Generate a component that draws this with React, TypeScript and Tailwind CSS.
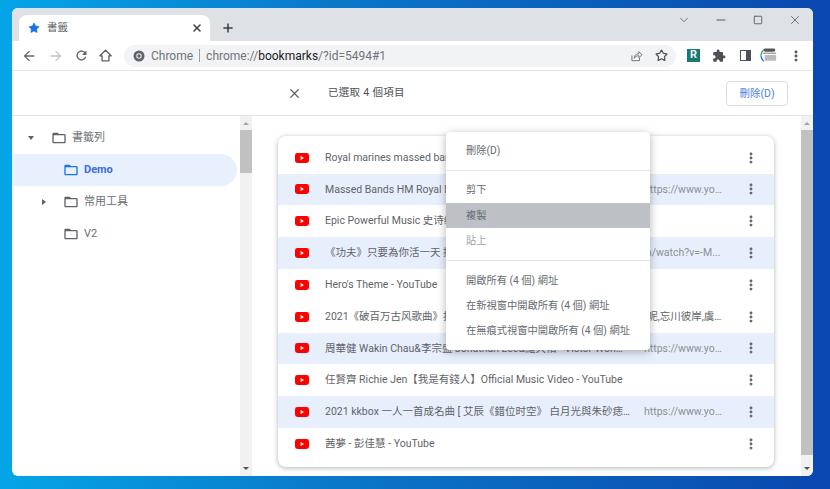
import { Star, X, Plus, ChevronDown, Minus, Square, EllipsisVertical } from "lucide-react";

const font = "font-['Roboto','Noto_Sans_CJK_TC',sans-serif]";

const rows = [
  { title: "Royal marines massed bands - YouTube", url: "", sel: false, titleW: "w-[397px]" },
  { title: "Massed Bands HM Royal Marines Beat Retreat - YouTube", url: "https://www.youtube.com/watch", sel: true, titleW: "w-[301px]", urlW: "ml-[18px] w-[78px]" },
  { title: "Epic Powerful Music 史诗级震撼音乐合集 - YouTube 播放清單 Deep", url: "", sel: false, titleW: "w-[397px]" },
  { title: "《功夫》只要為你活一天 插曲 - YouTube", url: "https://www.youtube.com/watch?v=-M...", sel: true, titleW: "w-[188px]", urlW: "ml-[18px] w-[200px]" },
  { title: "Hero's Theme - YouTube", url: "", sel: false, titleW: "w-[397px]" },
  { title: "2021《破百万古风歌曲》抖音 2021 古风歌曲大全,彼岸花,千年,\u200a白月光呢,忘川彼岸,虞美人", url: "", sel: false, titleW: "w-[398px]" },
  { title: "周華健 Wakin Chau&李宗盛 Jonathan Lee&羅大佑 - Victor Wong 2021 Live", url: "https://www.youtube.com/watch", sel: true, titleW: "w-[301px]", urlW: "ml-[18px] w-[78px]" },
  { title: "任賢齊 Richie Jen【我是有錢人】Official Music Video - YouTube", url: "", sel: false, titleW: "w-[397px]" },
  { title: "2021 kkbox 一人一首成名曲 [ 艾辰《錯位时空》 白月光與朱砂痣 周深 大魚 ]", url: "https://www.youtube.com/watch", sel: true, titleW: "w-[306px]", urlW: "ml-[13px] w-[78px]" },
  { title: "茜夢 - 彭佳慧 - YouTube", url: "", sel: false, titleW: "w-[397px]" },
];

function Icon({ d, className }: { d: string; className: string }) {
  return (
    <svg viewBox="0 0 24 24" fill="currentColor" className={className}>
      <path d={d} />
    </svg>
  );
}

function Folder({ blue }: { blue?: boolean }) {
  return (
    <Icon
      d="M20 6h-8l-2-2H4c-1.1 0-1.99.9-1.99 2L2 18c0 1.1.9 2 2 2h16c1.1 0 2-.9 2-2V8c0-1.1-.9-2-2-2zm0 12H4V8h16v10z"
      className={blue ? "size-[16px] text-[#1a73e8]" : "size-[16px] text-[#5f6368]"}
    />
  );
}

function Youtube() {
  return (
    <svg viewBox="0 0 14 10" className="h-[10px] w-[14px] shrink-0">
      <rect width="14" height="10" rx="2.4" fill="#f00" />
      <path d="M5.6 3v4l3.4-2z" fill="#fff" />
    </svg>
  );
}

function ScrollBar({ thumb }: { thumb: string }) {
  return (
    <div className="flex w-[12px] shrink-0 flex-col items-center bg-[#f1f1f1]">
      <div className="flex h-[14px] shrink-0 items-center justify-center">
        <div className="size-0 border-x-[3px] border-b-[3px] border-x-transparent border-b-[#a3a3a3]" />
      </div>
      <div className={thumb} />
      <div className="flex-1" />
      <div className="flex h-[16px] shrink-0 items-center justify-center">
        <div className="size-0 border-x-[3px] border-t-[3px] border-x-transparent border-t-[#505050]" />
      </div>
    </div>
  );
}

function TreeItem({ label, pad, arrow, active }: { label: string; pad: string; arrow?: "down" | "right"; active?: boolean }) {
  return (
    <div
      className={`flex h-[32px] w-[225px] items-center gap-[4px] rounded-r-full ${pad} ${
        active ? "bg-[#e8f0fe] font-bold text-[#3b6fd6]" : "text-[#6a6f74]"
      }`}
    >
      {arrow === "down" && <div className="mr-[13px] ml-[-1px] size-0 border-x-[3px] border-t-[4px] border-x-transparent border-t-[#5f6368]" />}
      {arrow === "right" && <div className="mr-[13px] size-0 border-y-[3px] border-l-[4px] border-y-transparent border-l-[#5f6368]" />}
      <Folder blue={active} />
      <span className="ml-[1px] text-[11px]">{label}</span>
    </div>
  );
}

function MenuItem({ label, hot, off }: { label: string; hot?: boolean; off?: boolean }) {
  return (
    <div
      className={`flex h-[25px] items-center px-[20px] text-[10.25px] whitespace-nowrap ${hot ? "bg-[#bdc1c6]" : ""} ${
        off ? "text-[#a0a5aa]" : "text-[#666b70]"
      }`}
    >
      {label}
    </div>
  );
}

export default function App() {
  return (
    <div className={`h-[489px] w-[830px] overflow-hidden bg-[linear-gradient(90deg,#05a5e8_0%,#0a78c8_40%,#0a47ae_100%)] pt-[8px] pl-[12px] ${font}`}>
      <div className="relative flex h-[468px] w-[801px] flex-col overflow-hidden rounded-[6px] bg-white">
        {/* tab strip */}
        <div className="flex h-[33px] shrink-0 items-end bg-[#dee1e6] pl-[7px]">
          <div className="flex h-[26px] w-[191px] items-center rounded-t-[8px] bg-white pr-[7px] pl-[9px]">
            <Star className="size-[12px] text-[#1a73e8]" fill="currentColor" strokeWidth={1} />
            <span className="ml-[7px] flex-1 text-[10.5px] text-[#5f6368]">書籤</span>
            <X className="size-[12px] text-[#3c4043]" strokeWidth={3} />
          </div>
          <div className="flex h-[26px] items-center pl-[11px]">
            <Plus className="size-[14px] text-[#3c4043]" strokeWidth={2.6} />
          </div>
          <div className="mb-[9px] ml-auto flex h-[24px] items-center text-[#4d5156]">
            <div className="flex w-[37px] justify-center pl-[1px]">
              <ChevronDown className="size-[14px]" strokeWidth={1.2} />
            </div>
            <div className="flex w-[37px] justify-center">
              <Minus className="size-[14px]" strokeWidth={1.6} />
            </div>
            <div className="flex w-[37px] justify-center">
              <Square className="size-[10px]" strokeWidth={2} />
            </div>
            <div className="flex w-[37px] justify-center">
              <X className="size-[14px]" strokeWidth={1.3} />
            </div>
          </div>
        </div>

        {/* toolbar */}
        <div className="flex h-[30px] shrink-0 items-center border-b border-[#e3e5e8] bg-white pl-[9px]">
          <Icon d="M20 11H7.83l5.59-5.59L12 4l-8 8 8 8 1.41-1.41L7.83 13H20v-2z" className="size-[16px] text-[#5f6368]" />
          <Icon d="M12 4l-1.41 1.41L16.17 11H4v2h12.17l-5.58 5.59L12 20l8-8z" className="ml-[11px] size-[16px] text-[#bdc1c6]" />
          <Icon
            d="M17.65 6.35C16.2 4.9 14.21 4 12 4c-4.42 0-7.99 3.58-7.99 8s3.57 8 7.99 8c3.73 0 6.84-2.55 7.73-6h-2.08c-.82 2.33-3.04 4-5.65 4-3.31 0-6-2.69-6-6s2.69-6 6-6c1.66 0 3.14.69 4.22 1.78L13 11h7V4l-2.35 2.35z"
            className="ml-[10px] size-[15px] text-[#5f6368]"
          />
          <svg viewBox="0 0 24 24" fill="none" stroke="#5f6368" strokeWidth="2.2" className="ml-[9px] size-[15px]">
            <path d="M12 3.5 3 12.5h3.5v8h11v-8H21z" strokeLinejoin="round" />
          </svg>
          <div className="ml-[11px] flex h-[22px] w-[552px] items-center rounded-full bg-[#f1f3f4] pl-[9px]">
            <svg viewBox="0 0 24 24" className="size-[12px]">
              <circle cx="12" cy="12" r="11" fill="#5f6368" />
              <circle cx="12" cy="12" r="5.5" fill="#f1f3f4" />
              <circle cx="12" cy="12" r="3.6" fill="#5f6368" />
            </svg>
            <span className="ml-[6px] text-[12px] text-[#70757a]">Chrome</span>
            <span className="mx-[6px] h-[13px] w-px bg-[#9aa0a6]" />
            <span className="text-[12px] text-[#70757a]">
              chrome://<span className="text-[#202124]">bookmarks</span>/?id=5494#1
            </span>
            <svg viewBox="0 0 24 24" fill="none" stroke="#6b7075" strokeWidth="1.6" className="ml-auto size-[14px]">
              <path d="M5 11v9h13v-5M9 16c0-5 3-8 8-8V4.5l5 5.5-5 5v-3.5c-4 0-6.5 1.5-8 4.5z" strokeLinejoin="round" />
            </svg>
            <Star className="mr-[8px] ml-[12px] size-[13px] text-[#4d5156]" strokeWidth={2.2} />
          </div>
          <div className="ml-[11px] flex size-[13px] items-center justify-center bg-[#17796f] text-[11px] font-bold text-[#e8f4f2]">R</div>
          <Icon
            d="M20.5 11H19V7c0-1.1-.9-2-2-2h-4V3.5C13 2.12 11.88 1 10.5 1S8 2.12 8 3.5V5H4c-1.1 0-1.99.9-1.99 2v3.8H3.5c1.49 0 2.7 1.21 2.7 2.7s-1.21 2.7-2.7 2.7H2V20c0 1.1.9 2 2 2h3.8v-1.5c0-1.49 1.21-2.7 2.7-2.7 1.49 0 2.7 1.21 2.7 2.7V22H17c1.1 0 2-.9 2-2v-4h1.5c1.38 0 2.5-1.12 2.5-2.5S21.88 11 20.5 11z"
            className="ml-[12px] size-[14px] text-[#4d5156]"
          />
          <div className="ml-[14px] flex h-[11px] w-[11px] justify-end border-[1.5px] border-[#4d5156]">
            <div className="w-[4px] bg-[#4d5156]" />
          </div>
          <svg viewBox="0 0 20 20" className="ml-[8px] size-[19px]">
            <path d="M2 10a8 8 0 0 1 3-6" fill="none" stroke="#34a853" strokeWidth="1.4" />
            <path d="M2 10a8 8 0 0 0 3 6" fill="none" stroke="#1a73e8" strokeWidth="1.4" />
            <rect x="5" y="2.5" width="12" height="3.5" rx="1.5" fill="#555" />
            <rect x="4" y="7" width="14" height="1.2" fill="#888" />
            <rect x="6" y="9.5" width="12" height="6" fill="#bbb" />
          </svg>
          <EllipsisVertical className="ml-[11px] size-[14px] text-[#4d5156]" strokeWidth={3} />
        </div>

        {/* page header */}
        <div className="flex h-[45px] shrink-0 items-center border-b border-[#e3e5e8] pr-[25px] pl-[275px]">
          <X className="size-[15px] text-[#5f6368]" strokeWidth={2} />
          <span className="ml-[26px] text-[10.5px] tracking-[0.3px] text-[#4d5156]">已選取 4 個項目</span>
          <button className="mt-[1px] ml-auto h-[25px] w-[62px] rounded-[4px] border border-[#dadce0] text-[10.5px] text-[#4a7fe0]">刪除(D)</button>
        </div>

        {/* content */}
        <div className="flex min-h-0 flex-1">
          <div className="flex w-[228px] shrink-0 flex-col pt-[6px]">
            <TreeItem label="書籤列" pad="pl-[17px]" arrow="down" />
            <TreeItem label="Demo" pad="pl-[51px]" active />
            <TreeItem label="常用工具" pad="pl-[30px]" arrow="right" />
            <TreeItem label="V2" pad="pl-[51px]" />
          </div>
          <ScrollBar thumb="h-[43px] w-[12px] shrink-0 bg-[#c1c1c1]" />
          <div className="min-w-0 flex-1 pt-[20px] pl-[26px]">
            <div className="w-[496px] rounded-[8px] bg-white pt-[5.8px] pb-[7px] shadow-[0_1px_5px_rgba(60,64,67,0.4)]">
              {rows.map((r, i) => (
                <div key={i} className={`flex h-[31.8px] items-center pr-[16px] pl-[17px] ${r.sel ? "bg-[#e8effc]" : ""}`}>
                  <Youtube />
                  <div className="ml-[16px] flex min-w-0 flex-1 items-center">
                    <span className={`truncate text-[10.5px] text-[#5f6368] ${r.titleW}`}>{r.title}</span>
                    {r.url && <span className={`truncate text-[10.5px] text-[#8a9095] ${r.urlW}`}>{r.url}</span>}
                  </div>
                  <EllipsisVertical className="size-[14px] shrink-0 text-[#5f6368]" strokeWidth={3} />
                </div>
              ))}
            </div>
          </div>
          <ScrollBar thumb="h-[325px] w-[12px] shrink-0 bg-[#c1c1c1]" />
        </div>

        {/* context menu */}
        <div className="absolute top-[124px] left-[434px] w-[204px] rounded-[4px] bg-white pt-[6px] pb-[7px] shadow-[0_2px_8px_rgba(60,64,67,0.4)]">
          <MenuItem label="刪除(D)" />
          <div className="mt-[7px] mb-[6px] h-px bg-[#e3e5e8]" />
          <MenuItem label="剪下" />
          <div className="h-px" />
          <MenuItem label="複製" hot />
          <MenuItem label="貼上" off />
          <div className="my-[7px] h-px bg-[#e3e5e8]" />
          <MenuItem label="開啟所有 (4 個) 網址" />
          <MenuItem label="在新視窗中開啟所有 (4 個) 網址" />
          <MenuItem label="在無痕式視窗中開啟所有 (4 個) 網址" />
        </div>
      </div>
    </div>
  );
}
